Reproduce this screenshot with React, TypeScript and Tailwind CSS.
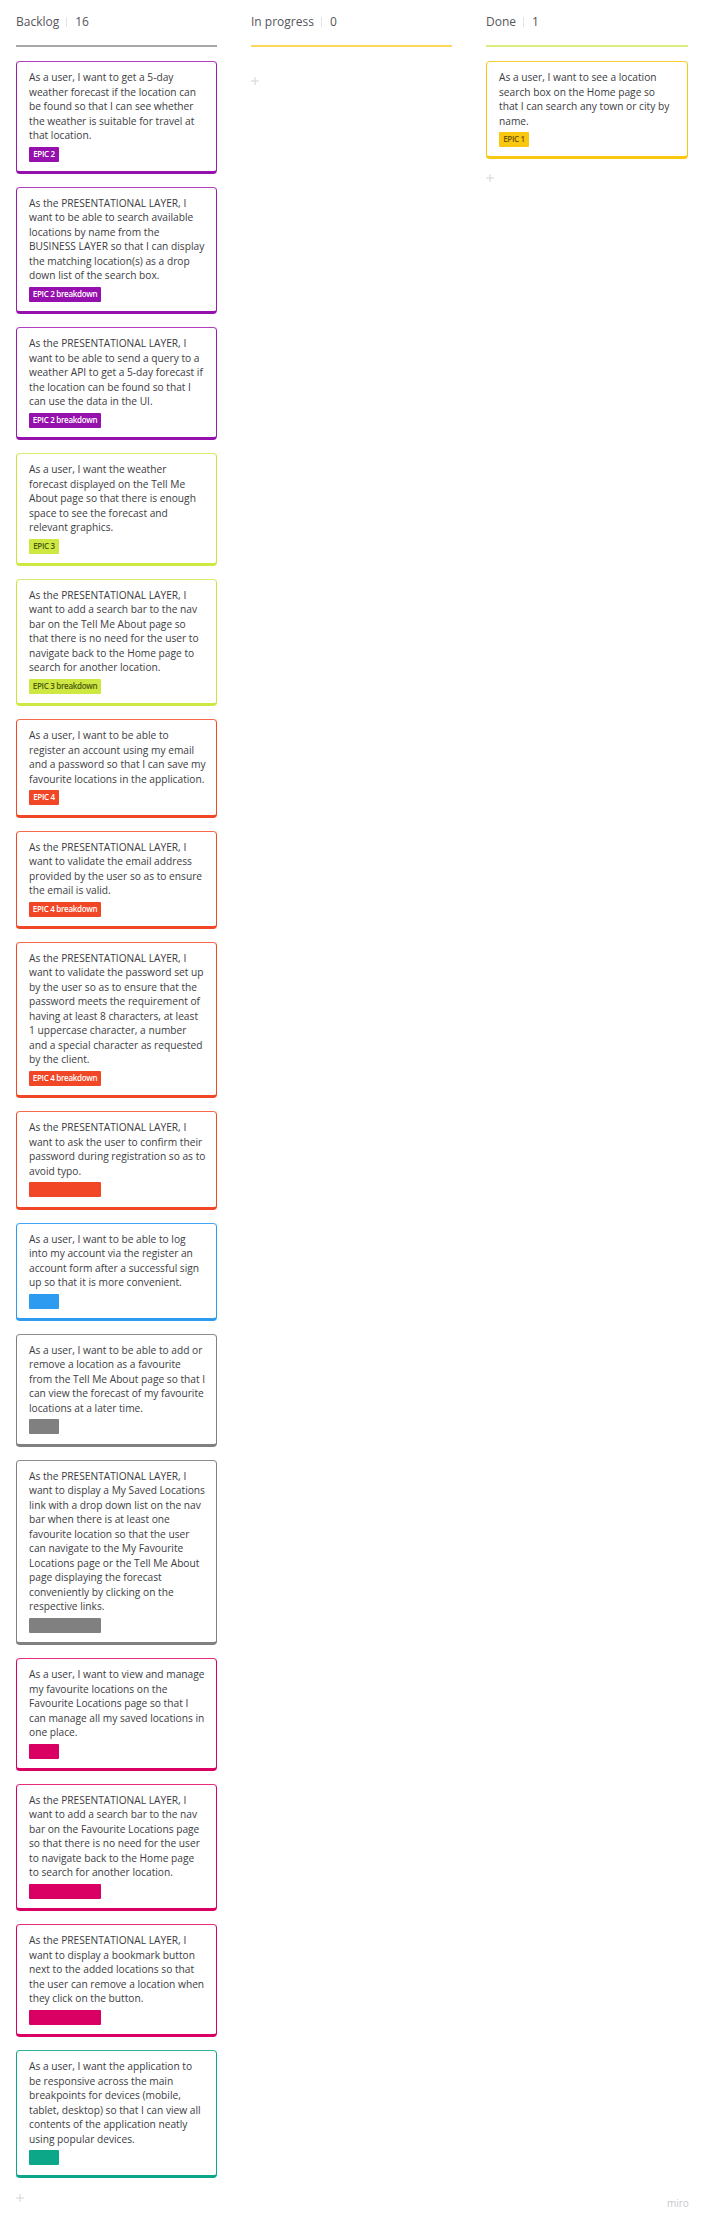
const cards: { lines: string[]; tag: string; tw: string; color: string }[] = [
  { lines: ["As a user, I want to get a 5-day", "weather forecast if the location can", "be found so that I can see whether", "the weather is suitable for travel at", "that location."], tag: "EPIC 2", tw: "w-[30px]", color: "purple" },
  { lines: ["As the PRESENTATIONAL LAYER, I", "want to be able to search available", "locations by name from the", "BUSINESS LAYER so that I can display", "the matching location(s) as a drop", "down list of the search box."], tag: "EPIC 2 breakdown", tw: "w-[72px]", color: "purple" },
  { lines: ["As the PRESENTATIONAL LAYER, I", "want to be able to send a query to a", "weather API to get a 5-day forecast if", "the location can be found so that I", "can use the data in the UI."], tag: "EPIC 2 breakdown", tw: "w-[72px]", color: "purple" },
  { lines: ["As a user, I want the weather", "forecast displayed on the Tell Me", "About page so that there is enough", "space to see the forecast and", "relevant graphics."], tag: "EPIC 3", tw: "w-[30px]", color: "lime" },
  { lines: ["As the PRESENTATIONAL LAYER, I", "want to add a search bar to the nav", "bar on the Tell Me About page so", "that there is no need for the user to", "navigate back to the Home page to", "search for another location."], tag: "EPIC 3 breakdown", tw: "w-[72px]", color: "lime" },
  { lines: ["As a user, I want to be able to", "register an account using my email", "and a password so that I can save my", "favourite locations in the application."], tag: "EPIC 4", tw: "w-[30px]", color: "red" },
  { lines: ["As the PRESENTATIONAL LAYER, I", "want to validate the email address", "provided by the user so as to ensure", "the email is valid."], tag: "EPIC 4 breakdown", tw: "w-[72px]", color: "red" },
  { lines: ["As the PRESENTATIONAL LAYER, I", "want to validate the password set up", "by the user so as to ensure that the", "password meets the requirement of", "having at least 8 characters, at least", "1 uppercase character, a number", "and a special character as requested", "by the client."], tag: "EPIC 4 breakdown", tw: "w-[72px]", color: "red" },
  { lines: ["As the PRESENTATIONAL LAYER, I", "want to ask the user to confirm their", "password during registration so as to", "avoid typo."], tag: "", tw: "w-[72px]", color: "red" },
  { lines: ["As a user, I want to be able to log", "into my account via the register an", "account form after a successful sign", "up so that it is more convenient."], tag: "", tw: "w-[30px]", color: "blue" },
  { lines: ["As a user, I want to be able to add or", "remove a location as a favourite", "from the Tell Me About page so that I", "can view the forecast of my favourite", "locations at a later time."], tag: "", tw: "w-[30px]", color: "gray" },
  { lines: ["As the PRESENTATIONAL LAYER, I", "want to display a My Saved Locations", "link with a drop down list on the nav", "bar when there is at least one", "favourite location so that the user", "can navigate to the My Favourite", "Locations page or the Tell Me About", "page displaying the forecast", "conveniently by clicking on the", "respective links."], tag: "", tw: "w-[72px]", color: "gray" },
  { lines: ["As a user, I want to view and manage", "my favourite locations on the", "Favourite Locations page so that I", "can manage all my saved locations in", "one place."], tag: "", tw: "w-[30px]", color: "pink" },
  { lines: ["As the PRESENTATIONAL LAYER, I", "want to add a search bar to the nav", "bar on the Favourite Locations page", "so that there is no need for the user", "to navigate back to the Home page", "to search for another location."], tag: "", tw: "w-[72px]", color: "pink" },
  { lines: ["As the PRESENTATIONAL LAYER, I", "want to display a bookmark button", "next to the added locations so that", "the user can remove a location when", "they click on the button."], tag: "", tw: "w-[72px]", color: "pink" },
  { lines: ["As a user, I want the application to", "be responsive across the main", "breakpoints for devices (mobile,", "tablet, desktop) so that I can view all", "contents of the application neatly", "using popular devices."], tag: "", tw: "w-[30px]", color: "teal" },
];

const palette: Record<string, { card: string; tag: string }> = {
  purple: { card: "border-[#9c1cb2] border-t-[#b23dc0] border-b-[#9510ac]", tag: "bg-[#9510ac] text-white" },
  lime: { card: "border-[#cbe43a] border-t-[#d8ea6c] border-b-[#cee741]", tag: "bg-[#cee741] text-[#4a5a10]" },
  red: { card: "border-[#f24726] border-t-[#f76a4a] border-b-[#f24726]", tag: "bg-[#f24726] text-white" },
  blue: { card: "border-[#2d9bf0] border-t-[#45a5f5] border-b-[#2d9bf0]", tag: "bg-[#2d9bf0] text-white" },
  gray: { card: "border-[#808080] border-t-[#8c8c8c] border-b-[#808080]", tag: "bg-[#808080] text-white" },
  pink: { card: "border-[#da0063] border-t-[#e62b7d] border-b-[#da0063]", tag: "bg-[#da0063] text-white" },
  teal: { card: "border-[#0ca789] border-t-[#2bb398] border-b-[#0ca789]", tag: "bg-[#0ca789] text-white" },
  yellow: { card: "border-[#fac710] border-t-[#fbcf34] border-b-[#fac710]", tag: "bg-[#fac710] text-[#6b5500]" },
};

function Card({ lines, tag, tw, color }: { lines: string[]; tag: string; tw: string; color: string }) {
  const p = palette[color];
  return (
    <div className={`w-full rounded-[4px] border-[1px] border-b-[3px] bg-white pl-[12px] pr-[4px] pt-[8px] pb-[9.35px] ${p.card}`}>
      <div className="text-[10.2px] leading-[14.5px] text-[#3c3c42]">
        {lines.map((l, i) => (
          <div key={i} className="whitespace-nowrap">{l}</div>
        ))}
      </div>
      <div className={`mt-[4px] h-[15px] rounded-[1px] text-center text-[8px] font-semibold leading-[14px] tracking-[-0.3px] whitespace-nowrap ${tw} ${p.tag}`}>{tag}</div>
    </div>
  );
}

function Plus({ className }: { className: string }) {
  return (
    <svg className={className} width="8" height="8" viewBox="0 0 8 8" fill="none" stroke="#d4d4d8" strokeWidth="1">
      <path d="M4 0v8M0 4h8" />
    </svg>
  );
}

function Header({ title, count, line }: { title: string; count: string; line: string }) {
  return (
    <div className={`flex h-[47px] items-start border-b-[2px] pt-[13px] text-[12px] leading-[18px] text-[#55555c] ${line}`}>
      <span>{title}</span>
      <span className="ml-[7px] mr-[8px] mt-[4px] h-[10px] w-[1px] bg-[#e3e3e6]" />
      <span>{count}</span>
    </div>
  );
}

export default function App() {
  return (
    <div className="relative h-[2221px] w-[703px] overflow-hidden bg-white font-['Open_Sans',sans-serif]">
      <div className="grid grid-cols-[201px_201px_202px] gap-x-[34px] pl-[16px]">
        <div>
          <Header title="Backlog" count="16" line="border-[#a8a8a8]" />
          <div className="mt-[14px] flex flex-col gap-[13px]">
            {cards.map((c, i) => <Card key={i} {...c} />)}
          </div>
          <Plus className="mt-[16px]" />
        </div>
        <div>
          <Header title="In progress" count="0" line="border-[#fdd85d]" />
          <Plus className="mt-[30px]" />
        </div>
        <div>
          <Header title="Done" count="1" line="border-[#dcec7c]" />
          <div className="mt-[14px]">
            <Card lines={["As a user, I want to see a location", "search box on the Home page so", "that I can search any town or city by", "name."]} tag="EPIC 1" tw="w-[30px]" color="yellow" />
          </div>
          <Plus className="mt-[15px]" />
        </div>
      </div>
      <span className="absolute left-[667px] top-[2196px] text-[10px] leading-[14px] text-[#c8c8cc]">miro</span>
    </div>
  );
}
